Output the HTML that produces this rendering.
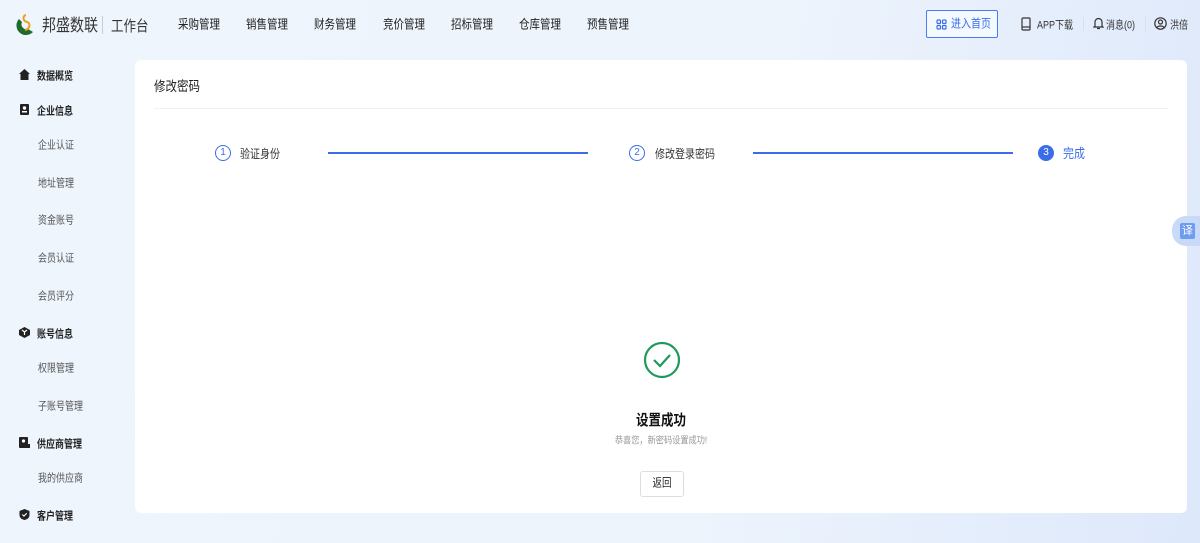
<!DOCTYPE html>
<html><head><meta charset="utf-8"><style>
*{margin:0;padding:0;box-sizing:border-box}
body{width:1200px;height:543px;overflow:hidden;font-family:"Liberation Sans","Noto Sans CJK SC",sans-serif;background:linear-gradient(100deg,#eef5fc 0%,#eef4fc 60%,#dde8fb 100%);position:relative;color:#222;white-space:nowrap}
.t{display:inline-block;transform:scaleY(1.2);transform-origin:left center}
.top{position:absolute;left:0;top:0;width:1200px;height:50px}
.logo{position:absolute;left:14px;top:13px}
.brand{position:absolute;left:42px;top:15px;font-size:14px;color:#333}
.sep{position:absolute;left:102px;top:16px;width:1px;height:18px;background:#ccc}
.wt{position:absolute;left:111px;top:15px;font-size:12.5px;color:#333}
.nav{position:absolute;top:17px;font-size:10.5px;color:#222}
.btn{position:absolute;left:926px;top:10px;width:72px;height:28px;border:1px solid #4a7cf0;border-radius:2px;background:#f4f8ff;color:#3a6ee8;font-size:10px;line-height:26px;padding-left:24px}
.btn .t{vertical-align:top;margin-top:1px}
.r{position:absolute;top:18px;font-size:9px;color:#333}
.side{position:absolute;left:0;top:50px;width:134px;height:493px}
.mi{position:absolute;left:37px;font-size:9px;color:#222;font-weight:bold}
.si{position:absolute;left:38px;font-size:9px;color:#555}
.ic{position:absolute;left:19px;width:11px;height:11px}
.card{position:absolute;left:135px;top:60px;width:1052px;height:453px;background:#fff;border-radius:6px}
.title{position:absolute;left:19px;top:18px;font-size:11.5px;color:#222}
.hr{position:absolute;left:19px;top:48px;width:1014px;height:1px;background:#eef0f3}
.circ{position:absolute;width:16px;height:16px;border-radius:50%;border:1px solid #3a6ee8;color:#3a6ee8;font-size:10px;text-align:center;line-height:14px}
.st{position:absolute;font-size:10px;color:#333;top:85px}
.line{position:absolute;height:2px;background:#3a6ee8;top:92px}
.tr{position:absolute;right:0;top:216px;width:28px;height:30px;background:#c9daf8;border-radius:14px 0 0 14px}
.tr span{position:absolute;left:8px;top:7px;width:15px;height:16px;background:#6d9cf0;color:#fff;font-size:11px;text-align:center;line-height:16px;border-radius:2px}
</style></head><body>
<div class="top">
<svg class="logo" width="24" height="24" viewBox="0 0 24 24"><path d="M5 6 A9 9 0 0 0 19 19 L14 16 A5 5 0 0 1 8 9Z" fill="#1f6b2d"/><path d="M12 2 C8 3 9 8 13 9 C17 10 16 16 11 17" stroke="#e9a21c" stroke-width="2" fill="none"/></svg>
<div class="brand"><span class="t">邦盛数联</span></div><div class="sep"></div><div class="wt"><span class="t">工作台</span></div>
<div class="nav" style="left:178px"><span class="t">采购管理</span></div><div class="nav" style="left:246px"><span class="t">销售管理</span></div><div class="nav" style="left:314px"><span class="t">财务管理</span></div><div class="nav" style="left:383px"><span class="t">竞价管理</span></div><div class="nav" style="left:451px"><span class="t">招标管理</span></div><div class="nav" style="left:519px"><span class="t">仓库管理</span></div><div class="nav" style="left:587px"><span class="t">预售管理</span></div>
<div class="btn"><svg style="position:absolute;left:9px;top:8px" width="11" height="11" viewBox="0 0 11 11" fill="none" stroke="#3a6ee8" stroke-width="1.2"><rect x="1" y="1" width="3.5" height="3.5" rx="1"/><rect x="6.5" y="1" width="3.5" height="3.5" rx="1"/><rect x="1" y="6.5" width="3.5" height="3.5" rx="1"/><rect x="6.5" y="6.5" width="3.5" height="3.5" rx="1"/></svg><span class="t">进入首页</span></div>
<svg style="position:absolute;left:1021px;top:17px" width="10" height="14" viewBox="0 0 10 14" fill="none" stroke="#333" stroke-width="1.2"><rect x="1" y="1" width="8" height="12" rx="1"/><path d="M1 10h8"/></svg>
<div class="r" style="left:1037px"><span class="t">APP下载</span></div>
<div style="position:absolute;left:1083px;top:17px;width:1px;height:14px;background:#dde"></div>
<svg style="position:absolute;left:1093px;top:17px" width="11" height="13" viewBox="0 0 11 13" fill="none" stroke="#333" stroke-width="1.2"><path d="M2 9V5a3.5 3.5 0 0 1 7 0v4l1 1H1z M4 11.5h3"/></svg>
<div class="r" style="left:1106px"><span class="t">消息(0)</span></div>
<div style="position:absolute;left:1145px;top:17px;width:1px;height:14px;background:#dde"></div>
<svg style="position:absolute;left:1154px;top:17px" width="13" height="13" viewBox="0 0 13 13" fill="none" stroke="#333" stroke-width="1.2"><circle cx="6.5" cy="6.5" r="5.7"/><circle cx="6.5" cy="5" r="2"/><path d="M3 10.5c1-2 6-2 7 0"/></svg>
<div class="r" style="left:1170px"><span class="t">洪倍</span></div>
</div>
<div class="side">
<svg class="ic" style="top:19px" viewBox="0 0 11 11"><path d="M5.5 0L11 5H9.5v6h-8V5H0z" fill="#222"/></svg><div class="mi" style="top:19px"><span class="t">数据概览</span></div>
<svg class="ic" style="top:54px" viewBox="0 0 11 11"><rect x="1" y="0" width="9" height="11" rx="1" fill="#222"/><circle cx="5.5" cy="4" r="1.7" fill="#fff"/><rect x="3" y="7" width="5" height="1.5" fill="#fff"/></svg><div class="mi" style="top:54px"><span class="t">企业信息</span></div>
<div class="si" style="top:88px"><span class="t">企业认证</span></div><div class="si" style="top:126px"><span class="t">地址管理</span></div><div class="si" style="top:163px"><span class="t">资金账号</span></div><div class="si" style="top:201px"><span class="t">会员认证</span></div><div class="si" style="top:239px"><span class="t">会员评分</span></div>
<svg class="ic" style="top:277px" viewBox="0 0 11 11"><path d="M5.5 0L11 3v5L5.5 11 0 8V3z" fill="#222"/><path d="M3 3l2.5 2 2.5-2M5.5 5v3" stroke="#fff" stroke-width="1.2" fill="none"/></svg><div class="mi" style="top:277px"><span class="t">账号信息</span></div>
<div class="si" style="top:311px"><span class="t">权限管理</span></div><div class="si" style="top:349px"><span class="t">子账号管理</span></div>
<svg class="ic" style="top:387px" viewBox="0 0 11 11"><rect x="0" y="0" width="9" height="11" rx="1" fill="#222"/><circle cx="4.5" cy="4" r="1.6" fill="#fff"/><rect x="8" y="7" width="3" height="4" fill="#222"/></svg><div class="mi" style="top:387px"><span class="t">供应商管理</span></div>
<div class="si" style="top:421px"><span class="t">我的供应商</span></div>
<svg class="ic" style="top:459px" viewBox="0 0 11 11"><path d="M5.5 0L10.5 2v4c0 3-2.5 4.5-5 5C3 10.5.5 9 .5 6V2z" fill="#222"/><path d="M3.3 5.5l1.6 1.6 2.8-2.8" stroke="#fff" stroke-width="1.1" fill="none"/></svg><div class="mi" style="top:459px"><span class="t">客户管理</span></div>
</div>
<div class="card">
<div class="title"><span class="t">修改密码</span></div><div class="hr"></div>
<div class="circ" style="left:80px;top:85px">1</div><div class="st" style="left:105px"><span class="t">验证身份</span></div>
<div class="line" style="left:193px;width:260px"></div>
<div class="circ" style="left:494px;top:85px">2</div><div class="st" style="left:520px"><span class="t">修改登录密码</span></div>
<div class="line" style="left:618px;width:260px"></div>
<div class="circ" style="left:903px;top:85px;background:#3a6ee8;color:#fff">3</div><div class="st" style="left:928px;color:#3a6ee8;font-size:11px"><span class="t">完成</span></div>
<svg style="position:absolute;left:508px;top:281px" width="38" height="38" viewBox="0 0 38 38" fill="none" stroke="#1f9a5c" stroke-width="2.2"><circle cx="19" cy="19" r="17"/><path d="M11 19l6 6 10-11"/></svg>
<div style="position:absolute;left:0;width:1052px;top:349px;text-align:center;font-size:12.5px;font-weight:bold;color:#111"><span class="t" style="transform-origin:center">设置成功</span></div>
<div style="position:absolute;left:0;width:1052px;top:374px;text-align:center;font-size:8.2px;color:#999"><span class="t" style="transform-origin:center">恭喜您，新密码设置成功!</span></div>
<div style="position:absolute;left:505px;top:411px;width:44px;height:26px;border:1px solid #ddd;border-radius:3px;font-size:9.5px;text-align:center;line-height:24px;color:#222"><span class="t" style="transform-origin:center">返回</span></div>
</div>
<div class="tr"><span>译</span></div>
</body></html>
